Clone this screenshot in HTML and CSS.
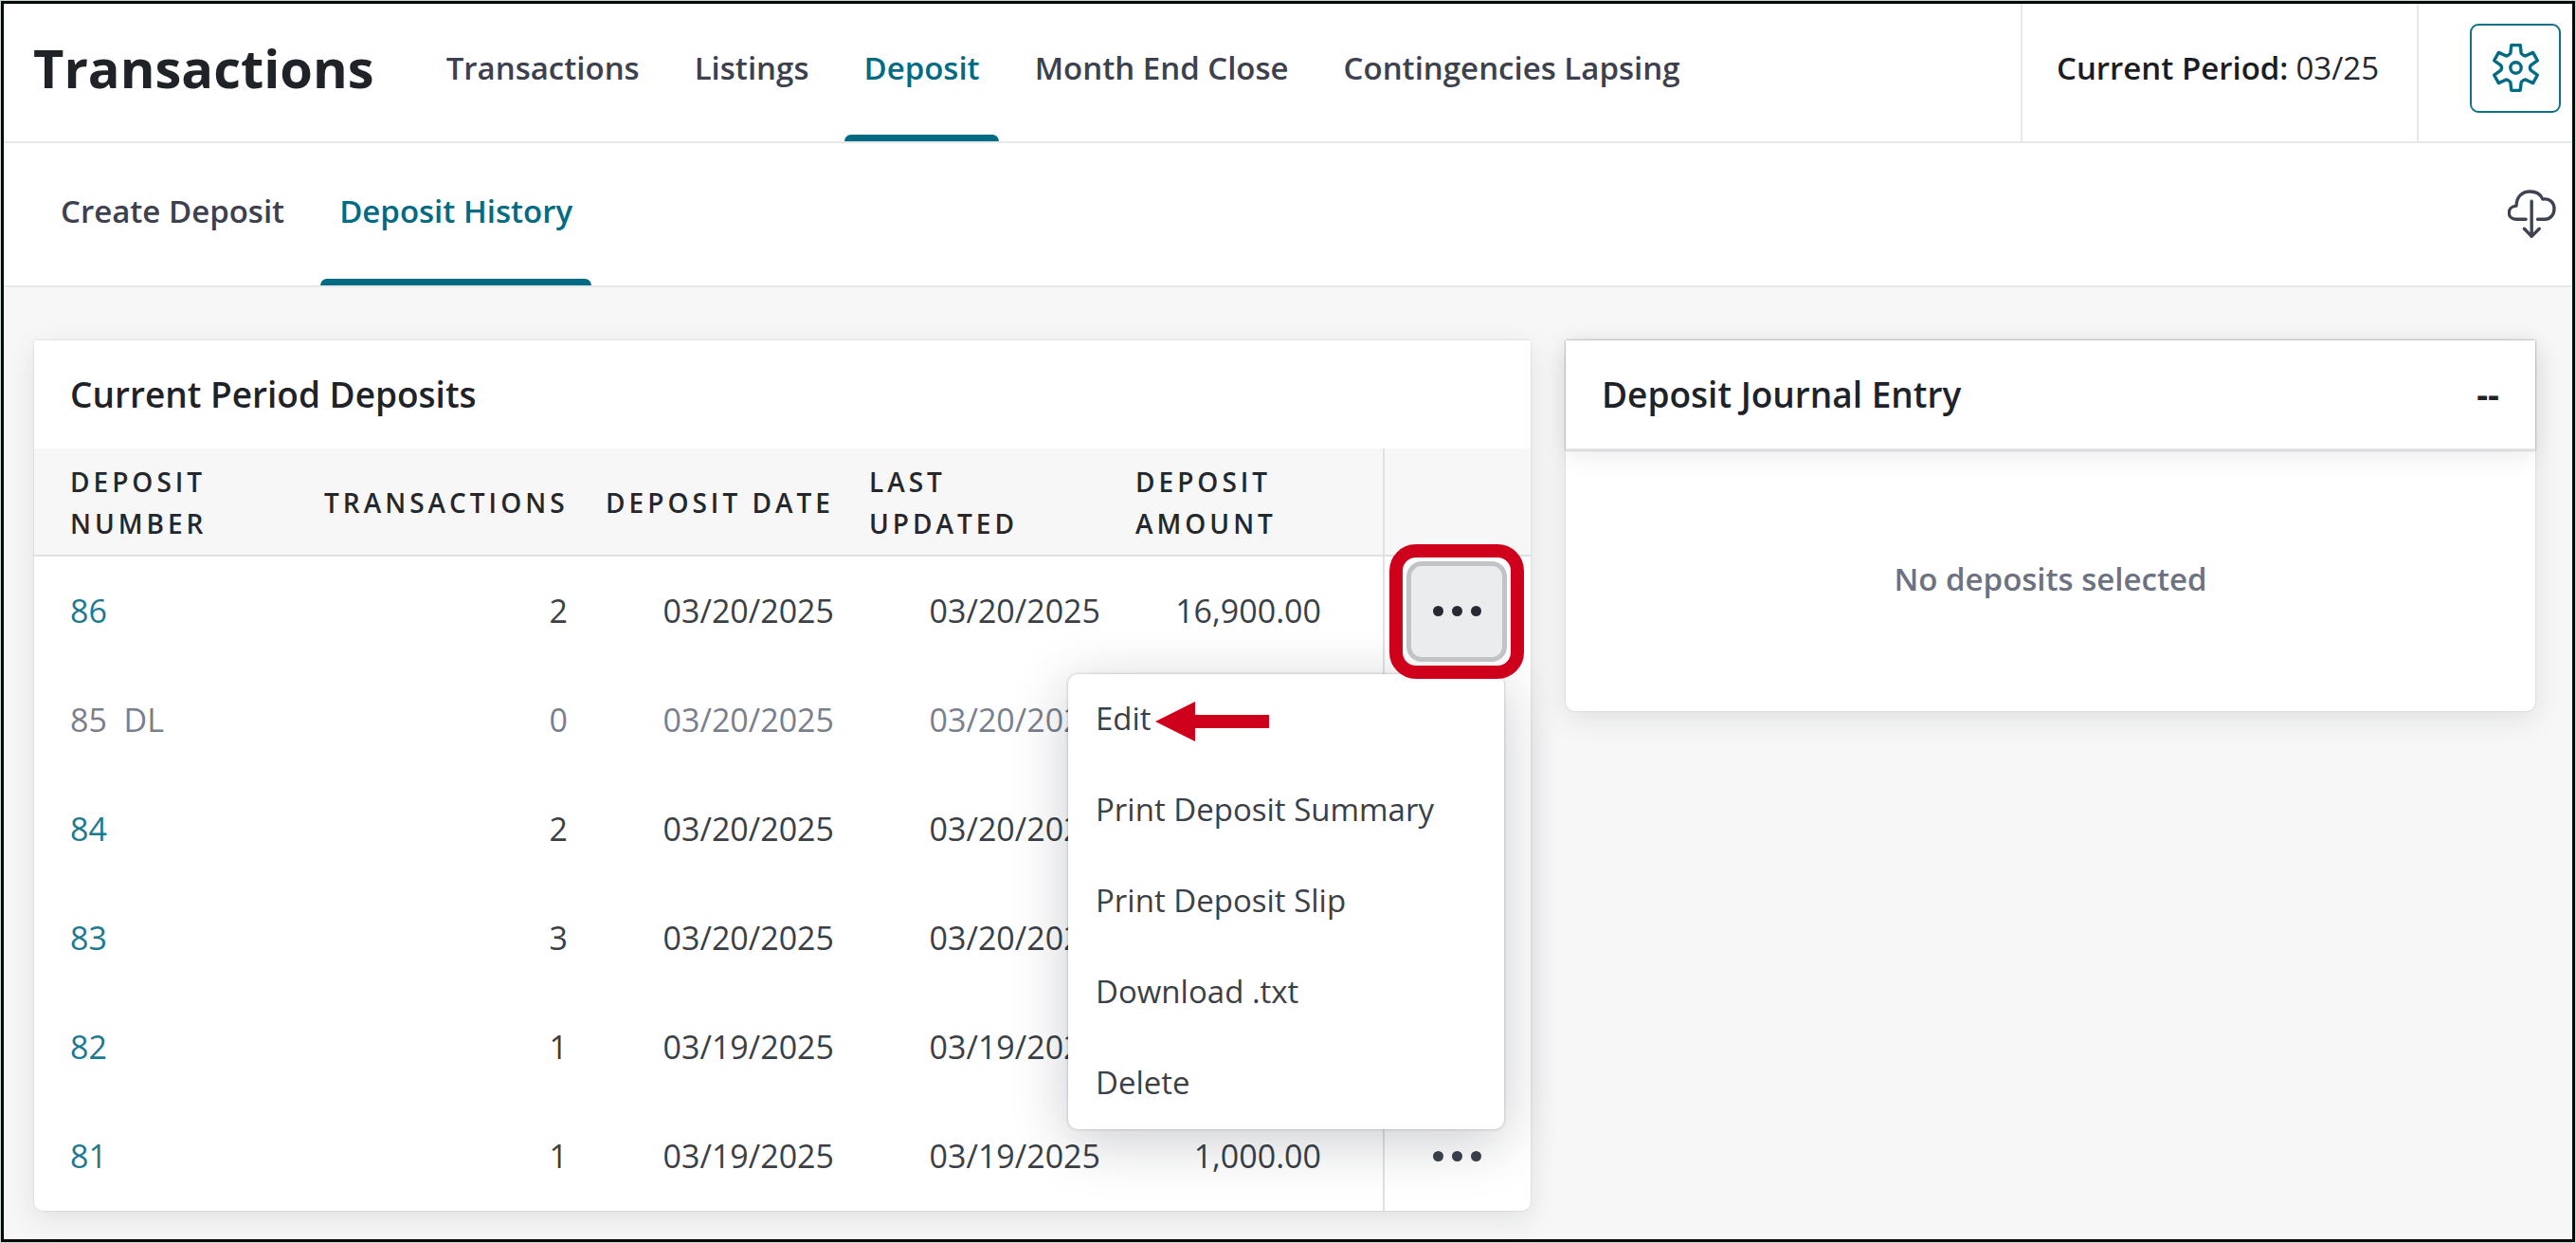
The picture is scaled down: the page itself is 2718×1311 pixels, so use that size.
FILE: index.html
```
<!DOCTYPE html>
<html lang="en">
<head>
<meta charset="UTF-8">
<meta name="viewport" content="width=device-width, initial-scale=1.0">
<title>Transactions - Deposit History</title>
<link rel="stylesheet" href="styles.css">
</head>
<body>
<div class="frame">

<header class="topbar">
<h1>Transactions</h1>
<nav class="tabs main-tabs">
<a href="#">Transactions</a>
<a href="#">Listings</a>
<a href="#" class="active">Deposit</a>
<a href="#">Month End Close</a>
<a href="#">Contingencies Lapsing</a>
</nav>
<div class="period"><strong>Current Period:</strong> 03/25</div>
<div class="settings">
<button class="gear-btn" aria-label="Settings">
<svg viewBox="-76 -76 152 152"><path d="M-17-45L-14-71H14L17-45Q23-39 30-37L54-48L68-23L47-8Q42 0 47 8L68 23L54 48L30 37Q23 39 17 45L14 71H-14L-17 45Q-23 39-30 37L-54 48L-68 23L-47 8Q-42 0-47-8L-68-23L-54-48L-30-37Q-23-39-17-45Z"/><circle r="17"/></svg>
</button>
</div>
</header>

<div class="subbar">
<nav class="tabs">
<a href="#">Create Deposit</a>
<a href="#" class="active">Deposit History</a>
</nav>
<button class="download-btn" aria-label="Download">
<svg viewBox="170 570 152 152"><path d="M227 663H197C166 663 166 623 197 621C197 592 216 576 240 576C260 576 274 586 280 600C304 597 316 612 316 630C316 648 305 663 287 663H264M245 606V716M222 693L245 717L269 693"/></svg>
</button>
</div>

<main class="content">
<section class="card">
<h2>Current Period Deposits</h2>
<table>
<colgroup><col class="c-number"><col class="c-trans"><col class="c-date"><col class="c-date"><col class="c-amount"><col class="c-action"></colgroup>
<thead>
<tr><th>Deposit<br>Number</th><th class="num">Transactions</th><th class="num">Deposit Date</th><th>Last<br>Updated</th><th>Deposit<br>Amount</th><th class="action"></th></tr>
</thead>
<tbody>
<tr>
<td><a href="#">86</a></td><td class="num">2</td><td class="num">03/20/2025</td><td class="num">03/20/2025</td><td class="num amount">16,900.00</td>
<td class="action">
<button class="more open" aria-label="Actions for 86"><i></i><i></i><i></i></button>
<div class="menu">
<button>Edit</button>
<button>Print Deposit Summary</button>
<button>Print Deposit Slip</button>
<button>Download .txt</button>
<button>Delete</button>
<svg class="arrow" viewBox="0 0 120 42"><path d="M0 21L42 0V14H120V28H42V42Z"/></svg>
</div>
</td>
</tr>
<tr class="deleted"><td>85&nbsp; DL</td><td class="num">0</td><td class="num">03/20/2025</td><td class="num">03/20/2025</td><td class="num amount"></td><td class="action"></td></tr>
<tr><td><a href="#">84</a></td><td class="num">2</td><td class="num">03/20/2025</td><td class="num">03/20/2025</td><td class="num amount"></td><td class="action"></td></tr>
<tr><td><a href="#">83</a></td><td class="num">3</td><td class="num">03/20/2025</td><td class="num">03/20/2025</td><td class="num amount"></td><td class="action"></td></tr>
<tr><td><a href="#">82</a></td><td class="num">1</td><td class="num">03/19/2025</td><td class="num">03/19/2025</td><td class="num amount"></td><td class="action"></td></tr>
<tr><td><a href="#">81</a></td><td class="num">1</td><td class="num">03/19/2025</td><td class="num">03/19/2025</td><td class="num amount">1,000.00</td><td class="action"><button class="more" aria-label="Actions for 81"><i></i><i></i><i></i></button></td></tr>
</tbody>
</table>
</section>

<section class="card">
<div class="journal-head"><h2>Deposit Journal Entry</h2><span class="total">--</span></div>
<p class="empty">No deposits selected</p>
</section>
</main>

</div>
</body>
</html>
```
FILE: styles.css
```
* { box-sizing: border-box; }
body { margin: 0; background: #cdd6d0; color: #3b3f46; font: 400 33px/44px "Open Sans", "Noto Sans", sans-serif; }
a { color: #1b7a8f; text-decoration: none; }
button { font: inherit; color: inherit; background: none; border: none; padding: 0; cursor: pointer; }
svg { display: block; fill: none; }
h1, h2 { margin: 0; color: #1f2328; }

.frame { min-height: calc(100vh - 2px); margin: 1px; border: 3px solid #060a08; background: #f7f7f7; display: flex; flex-direction: column; }

/* top bars */
.topbar, .subbar { display: flex; background: #fff; border-bottom: 2px solid #e8e8ea; }
.topbar { height: 147px; padding-left: 31px; }
.topbar h1 { align-self: center; padding-bottom: 12px; font-size: 56px; line-height: 72px; font-weight: 700; }
.subbar { height: 152px; padding-left: 40px; justify-content: space-between; }
.tabs { display: flex; gap: 18px; }
.main-tabs { margin-left: 56px; }
.tabs a { position: relative; display: flex; align-items: center; padding: 0 20px 7px; color: #3d404d; font-weight: 600; white-space: nowrap; }
.main-tabs a { padding-bottom: 10px; }
.tabs a.active { color: #006b82; }
.tabs a.active::after { content: ""; position: absolute; left: 0; right: 0; bottom: 0; height: 7px; background: #006b82; border-radius: 7px 7px 0 0; }
.period { display: flex; align-items: center; gap: 8px; margin-left: auto; padding: 0 40px 10px 36px; border: solid #e8e8ea; border-width: 0 2px; color: #24272c; white-space: nowrap; }
.period strong { font-weight: 600; color: #1a1d22; }
.settings { display: flex; align-items: center; padding: 0 12px 10px 54px; }
.gear-btn { width: 96px; height: 94px; border: 2px solid #0f7387; border-radius: 9px; display: flex; align-items: center; justify-content: center; }
.gear-btn svg { width: 51px; height: 51px; stroke: #006b82; stroke-width: 10; stroke-linejoin: round; }
.download-btn { padding: 0 17px 2px 0; }
.download-btn svg { width: 51px; height: 51px; stroke: #3d4350; stroke-width: 10; stroke-linecap: round; stroke-linejoin: round; }

/* cards */
.content { flex: 1; display: grid; grid-template-columns: 1579fr 1023fr; gap: 37px; align-items: start; padding: 56px 39px 24px 32px; }
.card { background: #fff; border-radius: 0 0 9px 9px; box-shadow: 0 0 2px rgba(20, 25, 40, .2), 0 8px 30px rgba(20, 25, 40, .1); }
h2 { padding: 35px 38px; font-size: 37px; line-height: 44px; font-weight: 600; }
.journal-head { display: flex; justify-content: space-between; border-bottom: 2px solid #e2e3e5; box-shadow: 0 0 2px rgba(20, 25, 40, .4), 0 6px 24px rgba(20, 25, 40, .08); }
.total { padding: 35px 38px; font-size: 37px; font-weight: 700; color: #1f2328; }
.empty { margin: 0; padding: 114px 38px 117px; text-align: center; font-weight: 600; color: #6c7280; }

/* deposits table */
table { width: 100%; table-layout: fixed; border-collapse: separate; border-spacing: 0; }
.c-number { width: 287px; }
.c-trans { width: 294px; }
.c-date { width: 281px; }
.c-amount { width: 280px; }
.c-action { width: 156px; }
th, td { padding: 0 18px 0 19px; text-align: left; white-space: nowrap; }
th:first-child, td:first-child { padding-left: 38px; }
th { height: 114px; padding-top: 2px; background: #f7f7f7; border-bottom: 2px solid #e0e0e3; color: #24272c; font-size: 28px; font-weight: 600; letter-spacing: 4px; text-transform: uppercase; }
td { height: 115px; padding-bottom: 2px; font-size: 34px; }
th.num, td.num { text-align: right; }
td.amount { padding-right: 65px; }
th.action, td.action { position: relative; padding: 0 2px 0 0; border-left: 2px solid #e0e1e4; }
.deleted td { color: #7a7f8c; }

.more { position: relative; display: flex; align-items: center; justify-content: center; gap: 9px; width: 106px; height: 106px; margin: 0 auto; border-radius: 16px; color: #3d404d; }
.more i { width: 11px; height: 11px; border-radius: 50%; background: currentColor; }
.more.open { z-index: 3; background: #ebeced; border: 5px solid #c1c3c6; color: #272a33; }
.more.open::after { content: ""; position: absolute; inset: -23px; border: 14px solid #cf001c; border-radius: 28px; }

.menu { position: absolute; z-index: 2; top: 124px; right: 28px; width: 460px; background: #fff; border-radius: 10px; box-shadow: 0 0 3px rgba(20, 25, 40, .3), 0 12px 60px rgba(20, 25, 40, .22); }
.menu button { display: block; width: 100%; height: 96px; padding: 0 29px 2px; font-size: 33px; text-align: left; }
.arrow { position: absolute; top: 29px; left: 92px; width: 120px; height: 42px; fill: #cf001c; }
```
